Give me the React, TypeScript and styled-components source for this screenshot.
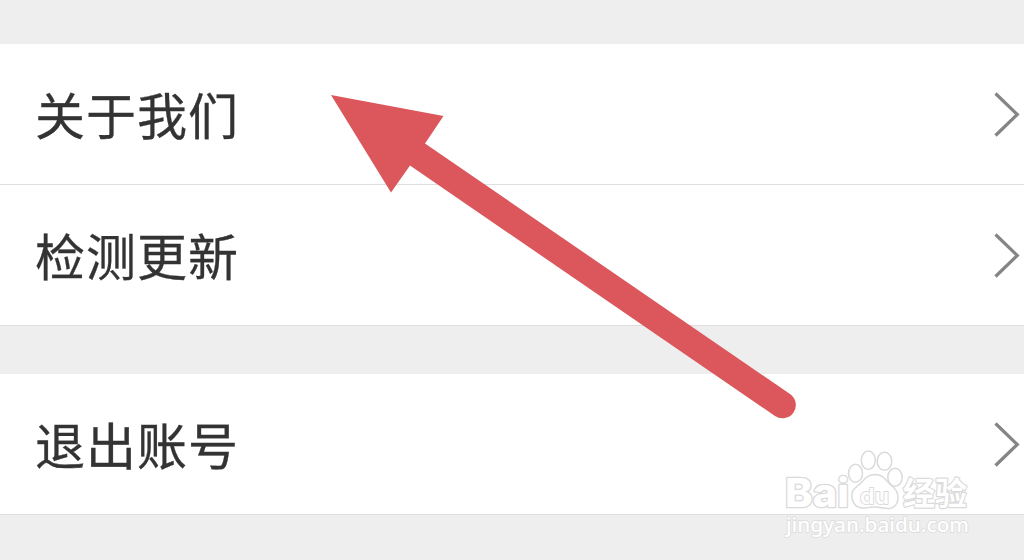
import React from 'react';
import styled, { createGlobalStyle } from 'styled-components';

const GlobalStyle = createGlobalStyle`
  * {
    box-sizing: border-box;
  }

  body {
    margin: 0;
    background-color: #eeeeee;
    font-family: 'Noto Sans CJK SC', sans-serif;
  }
`;

const Page = styled.main`
  position: relative;
  width: 1024px;
  height: 560px;
  padding-top: 44px;
  overflow: hidden;
  background-color: #eeeeee;
`;

const Group = styled.section`
  margin-bottom: 48px;
`;

const Row = styled.div`
  display: flex;
  align-items: center;
  justify-content: space-between;
  height: 141px;
  padding: 0 4px 0 35px;
  background-color: #ffffff;
  border-bottom: 1px solid #dedede;
  cursor: pointer;
`;

const Label = styled.span`
  padding-bottom: 2px;
  color: #333333;
  font-size: 50px;
  letter-spacing: 1px;
  line-height: 72px;
  white-space: nowrap;
  -webkit-text-stroke: 0.3px #333333;
`;

const ChevronIcon = styled.svg`
  width: 26px;
  height: 46px;
  fill: none;
  stroke: #858585;
  stroke-width: 3.2;
`;

// Drawings that lie over the list
const Overlay = styled.svg`
  position: absolute;
  top: 0;
  left: 0;
  width: 1024px;
  height: 560px;
  pointer-events: none;
`;

const Mark = styled.g`
  fill: #ffffff;
  stroke: #dadada;
  stroke-width: 1.5;
  stroke-linejoin: round;
`;

const BrandText = styled.text`
  font-family: Inter, sans-serif;
  font-size: 40px;
  font-weight: 800;
  stroke-width: 2.6;
  paint-order: stroke;
`;

const PawText = styled.text`
  font-family: Inter, sans-serif;
  font-size: 22px;
  font-weight: 600;
  stroke-width: 1.8;
  paint-order: stroke;
`;

const BrandSuffix = styled.text`
  font-family: 'Noto Sans CJK SC', sans-serif;
  font-size: 32px;
  font-weight: 700;
  stroke-width: 2.4;
  paint-order: stroke;
`;

const SiteText = styled.text`
  font-family: 'Noto Sans', sans-serif;
  font-size: 20.5px;
  font-weight: 500;
  stroke: #dedede;
  stroke-width: 1.8;
  paint-order: stroke;
`;

interface SettingRowProps {
  label: string;
}

const SettingRow: React.FC<SettingRowProps> = ({ label }) => (
  <Row>
    <Label>{label}</Label>
    <ChevronIcon viewBox="0 0 26 46">
      <path d="M1.5 2.5 L23.3 23.5 L1.5 44.5" />
    </ChevronIcon>
  </Row>
);

const groups = [['关于我们', '检测更新'], ['退出账号']];

const App: React.FC = () => (
  <>
    <GlobalStyle />
    <Page>
      {groups.map((items) => (
        <Group key={items[0]}>
          {items.map((label) => (
            <SettingRow key={label} label={label} />
          ))}
        </Group>
      ))}

      <Overlay viewBox="0 0 1024 560">
        <path
          d="M331 95 L443.5 116 L425 143.5 L790 394 A13.3 13.3 0 0 1 775 416 L410 165.5 L391 192.5 Z"
          fill="#db575b"
        />

        <Mark>
          <BrandText x="785" y="507" textLength="64" lengthAdjust="spacingAndGlyphs">Bai</BrandText>
          <ellipse cx="855.5" cy="473.3" rx="7" ry="9" />
          <ellipse cx="868.3" cy="460.3" rx="7" ry="9.2" />
          <ellipse cx="884.5" cy="461.3" rx="7.3" ry="9" />
          <ellipse cx="895" cy="477.3" rx="7.2" ry="9" />
          <path d="M875 474.5 C866 474.5 863 482 857.5 486 C852 490 851.5 493 852 498 C853 505 858 508.5 864 508 C868 507.5 870 507 875 507 C880 507 883 508.5 888 508.5 C895 508.5 898 503 898 498 C898 492 896 489 892 486 C886 481 884 474.5 875 474.5 Z" />
          <PawText x="860" y="503.5" textLength="29" lengthAdjust="spacingAndGlyphs">du</PawText>
          <BrandSuffix x="903" y="504.5" textLength="64" lengthAdjust="spacingAndGlyphs">经验</BrandSuffix>
          <SiteText x="786" y="532" textLength="183" lengthAdjust="spacingAndGlyphs">jingyan.baidu.com</SiteText>
        </Mark>
      </Overlay>
    </Page>
  </>
);

export default App;
